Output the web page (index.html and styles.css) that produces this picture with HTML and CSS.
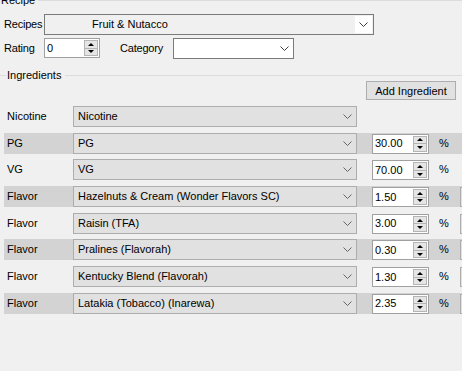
FILE: index.html
```html
<!DOCTYPE html>
<html lang="en">
<head>
    <meta charset="UTF-8">
    <meta name="viewport" content="width=device-width, initial-scale=1.0">
    <title>Recipe Editor</title>
    <link rel="stylesheet" href="styles.css">
</head>
<body>
    <section class="group recipe-group">
        <div class="group-head">
            <span class="group-title">Recipe</span>
            <span class="group-line"></span>
        </div>
        <div class="field-row">
            <label class="field-label">Recipes</label>
            <div class="combo combo-edit combo-recipes">
                <span class="combo-text">Fruit &amp; Nutacco</span>
                <span class="combo-btn"><svg class="chevron" width="9" height="5" viewBox="0 0 9 5"><path d="M0.5 0.5 4.5 4.5 8.5 0.5" fill="none" stroke="#404040"/></svg></span>
            </div>
        </div>
        <div class="field-row">
            <label class="field-label">Rating</label>
            <div class="numeric numeric-rating">
                <span class="numeric-value">0</span>
                <span class="spin"><span class="spin-btn up"></span><span class="spin-btn down"></span></span>
            </div>
            <label class="field-label category-label">Category</label>
            <div class="combo combo-white combo-category">
                <span class="combo-text"></span>
                <span class="combo-btn"><svg class="chevron" width="9" height="5" viewBox="0 0 9 5"><path d="M0.5 0.5 4.5 4.5 8.5 0.5" fill="none" stroke="#404040"/></svg></span>
            </div>
        </div>
    </section>

    <section class="group ingredients-group">
        <div class="group-head ingredients-head">
            <span class="group-line lead"></span>
            <span class="group-title">Ingredients</span>
            <span class="group-line"></span>
        </div>
        <div class="toolbar">
            <button class="win-btn add-btn">Add Ingredient</button>
        </div>

        <div class="ingredient-list">
            <div class="ing-row">
                <span class="ing-type">Nicotine</span>
                <div class="combo combo-flat">
                    <span class="combo-text">Nicotine</span>
                    <span class="combo-btn"><svg class="chevron" width="9" height="5" viewBox="0 0 9 5"><path d="M0.5 0.5 4.5 4.5 8.5 0.5" fill="none" stroke="#666"/></svg></span>
                </div>
            </div>
            <div class="ing-row alt">
                <span class="ing-type">PG</span>
                <div class="combo combo-flat">
                    <span class="combo-text">PG</span>
                    <span class="combo-btn"><svg class="chevron" width="9" height="5" viewBox="0 0 9 5"><path d="M0.5 0.5 4.5 4.5 8.5 0.5" fill="none" stroke="#666"/></svg></span>
                </div>
                <div class="numeric">
                    <span class="numeric-value">30.00</span>
                    <span class="spin"><span class="spin-btn up"></span><span class="spin-btn down"></span></span>
                </div>
                <span class="unit">%</span>
            </div>
            <div class="ing-row">
                <span class="ing-type">VG</span>
                <div class="combo combo-flat">
                    <span class="combo-text">VG</span>
                    <span class="combo-btn"><svg class="chevron" width="9" height="5" viewBox="0 0 9 5"><path d="M0.5 0.5 4.5 4.5 8.5 0.5" fill="none" stroke="#666"/></svg></span>
                </div>
                <div class="numeric">
                    <span class="numeric-value">70.00</span>
                    <span class="spin"><span class="spin-btn up"></span><span class="spin-btn down"></span></span>
                </div>
                <span class="unit">%</span>
            </div>
            <div class="ing-row alt">
                <span class="ing-type">Flavor</span>
                <div class="combo combo-flat">
                    <span class="combo-text">Hazelnuts &amp; Cream (Wonder Flavors SC)</span>
                    <span class="combo-btn"><svg class="chevron" width="9" height="5" viewBox="0 0 9 5"><path d="M0.5 0.5 4.5 4.5 8.5 0.5" fill="none" stroke="#666"/></svg></span>
                </div>
                <div class="numeric">
                    <span class="numeric-value">1.50</span>
                    <span class="spin"><span class="spin-btn up"></span><span class="spin-btn down"></span></span>
                </div>
                <span class="unit">%</span>
                <button class="win-btn remove-btn" aria-label="Remove"></button>
            </div>
            <div class="ing-row">
                <span class="ing-type">Flavor</span>
                <div class="combo combo-flat">
                    <span class="combo-text">Raisin (TFA)</span>
                    <span class="combo-btn"><svg class="chevron" width="9" height="5" viewBox="0 0 9 5"><path d="M0.5 0.5 4.5 4.5 8.5 0.5" fill="none" stroke="#666"/></svg></span>
                </div>
                <div class="numeric">
                    <span class="numeric-value">3.00</span>
                    <span class="spin"><span class="spin-btn up"></span><span class="spin-btn down"></span></span>
                </div>
                <span class="unit">%</span>
                <button class="win-btn remove-btn" aria-label="Remove"></button>
            </div>
            <div class="ing-row alt">
                <span class="ing-type">Flavor</span>
                <div class="combo combo-flat">
                    <span class="combo-text">Pralines (Flavorah)</span>
                    <span class="combo-btn"><svg class="chevron" width="9" height="5" viewBox="0 0 9 5"><path d="M0.5 0.5 4.5 4.5 8.5 0.5" fill="none" stroke="#666"/></svg></span>
                </div>
                <div class="numeric">
                    <span class="numeric-value">0.30</span>
                    <span class="spin"><span class="spin-btn up"></span><span class="spin-btn down"></span></span>
                </div>
                <span class="unit">%</span>
                <button class="win-btn remove-btn" aria-label="Remove"></button>
            </div>
            <div class="ing-row">
                <span class="ing-type">Flavor</span>
                <div class="combo combo-flat">
                    <span class="combo-text">Kentucky Blend (Flavorah)</span>
                    <span class="combo-btn"><svg class="chevron" width="9" height="5" viewBox="0 0 9 5"><path d="M0.5 0.5 4.5 4.5 8.5 0.5" fill="none" stroke="#666"/></svg></span>
                </div>
                <div class="numeric">
                    <span class="numeric-value">1.30</span>
                    <span class="spin"><span class="spin-btn up"></span><span class="spin-btn down"></span></span>
                </div>
                <span class="unit">%</span>
                <button class="win-btn remove-btn" aria-label="Remove"></button>
            </div>
            <div class="ing-row alt">
                <span class="ing-type">Flavor</span>
                <div class="combo combo-flat">
                    <span class="combo-text">Latakia (Tobacco) (Inarewa)</span>
                    <span class="combo-btn"><svg class="chevron" width="9" height="5" viewBox="0 0 9 5"><path d="M0.5 0.5 4.5 4.5 8.5 0.5" fill="none" stroke="#666"/></svg></span>
                </div>
                <div class="numeric">
                    <span class="numeric-value">2.35</span>
                    <span class="spin"><span class="spin-btn up"></span><span class="spin-btn down"></span></span>
                </div>
                <span class="unit">%</span>
                <button class="win-btn remove-btn" aria-label="Remove"></button>
            </div>
        </div>
    </section>
</body>
</html>
```

FILE: styles.css
```css
html, body {
    margin: 0;
    padding: 0;
}
body {
    width: 462px;
    height: 371px;
    overflow: hidden;
    background-color: #f0f0f0;
    color: #000;
    font-family: "Liberation Sans", Arial, sans-serif;
    font-size: 11px;
    line-height: 13px;
}

/* group boxes */
.group-head {
    display: flex;
    align-items: center;
    height: 13px;
}
.group-title {
    white-space: nowrap;
}
.group-line {
    flex: 1;
    height: 1px;
    background-color: #dcdcdc;
}
.recipe-group .group-head {
    margin-top: -6px;
    padding-left: 1px;
}
.recipe-group .group-line {
    margin-left: 3px;
}
.ingredients-head {
    margin-top: 10px;
    height: 12px;
}
.ingredients-head .group-line {
    margin-left: 4px;
}
.ingredients-head .group-line.lead {
    flex: none;
    width: 6px;
    margin: 0 1px 0 0;
}

/* recipe fields */
.field-row {
    display: flex;
    align-items: center;
    height: 21px;
    padding-left: 4px;
    margin-top: 3px;
}
.field-row > * {
    flex-shrink: 0;
}
.recipe-group .group-head + .field-row {
    margin-top: 7px;
}
.field-label {
    width: 40px;
    white-space: nowrap;
    letter-spacing: -0.2px;
}
.category-label {
    width: 53px;
    margin-left: 20px;
}

/* combo boxes */
.combo {
    display: flex;
    box-sizing: border-box;
    height: 21px;
    border: 1px solid #7a7a7a;
}
.combo-text {
    flex: 1;
    display: flex;
    align-items: center;
    white-space: nowrap;
    overflow: hidden;
}
.combo-btn {
    width: 17px;
    display: flex;
    align-items: center;
    justify-content: center;
}
.combo-recipes {
    width: 330px;
    padding: 1px;
    background-color: #f0f0f0;
}
.combo-recipes .combo-text {
    padding-left: 46px;
}
.combo-recipes .combo-btn {
    background-color: #fff;
}
.combo-category {
    width: 121px;
    background-color: #fff;
}
.combo-flat {
    width: 284px;
    border-color: #adadad;
    background-color: #e1e1e1;
}
.combo-flat .combo-text {
    padding-left: 4px;
}

/* numeric up/down */
.numeric {
    display: flex;
    box-sizing: border-box;
    width: 57px;
    height: 20px;
    border: 1px solid #a0a0a0;
    background-color: #fff;
}
.numeric-rating {
    width: 56px;
    align-self: flex-start;
}
.numeric-value {
    flex: 1;
    display: flex;
    align-items: center;
    padding-left: 2px;
}
.spin {
    width: 14px;
    margin: 1px 1px 1px 0;
    display: flex;
    flex-direction: column;
}
.spin-btn {
    flex: 1;
    display: flex;
    align-items: center;
    justify-content: center;
    box-sizing: border-box;
    border: 1px solid #b4b4b4;
    background-color: #e5e5e5;
}
.spin-btn.down {
    border-top: none;
}
.spin-btn.up::before,
.spin-btn.down::before {
    content: "";
    border-left: 3px solid transparent;
    border-right: 3px solid transparent;
}
.spin-btn.up::before {
    border-bottom: 3px solid #000;
}
.spin-btn.down::before {
    border-top: 3px solid #000;
}

/* buttons */
.win-btn {
    box-sizing: border-box;
    height: 19px;
    padding: 0;
    border: 1px solid #adadad;
    background-color: #e1e1e1;
    font-family: inherit;
    font-size: 11px;
    color: #000;
}
.toolbar {
    display: flex;
    justify-content: flex-end;
    padding-right: 6px;
}
.add-btn {
    width: 90px;
}

/* ingredient rows */
.ingredient-list {
    display: flex;
    flex-direction: column;
    gap: 5.7px;
    margin-top: 6px;
}
.ing-row {
    display: flex;
    align-items: flex-start;
    width: 500px;
    height: 21px;
    margin-left: 4px;
}
.ing-row > * {
    flex-shrink: 0;
}
.ing-row.alt {
    background-color: #d3d3d3;
}
.ing-type {
    width: 66px;
    height: 21px;
    padding-left: 3px;
    display: flex;
    align-items: center;
}
.ing-row .numeric {
    margin: 1px 0 0 15px;
}
.unit {
    box-sizing: border-box;
    width: 31px;
    height: 21px;
    padding-left: 10px;
    display: flex;
    align-items: center;
}
.remove-btn {
    width: 75px;
    height: 20px;
    margin-top: 1px;
}
```
